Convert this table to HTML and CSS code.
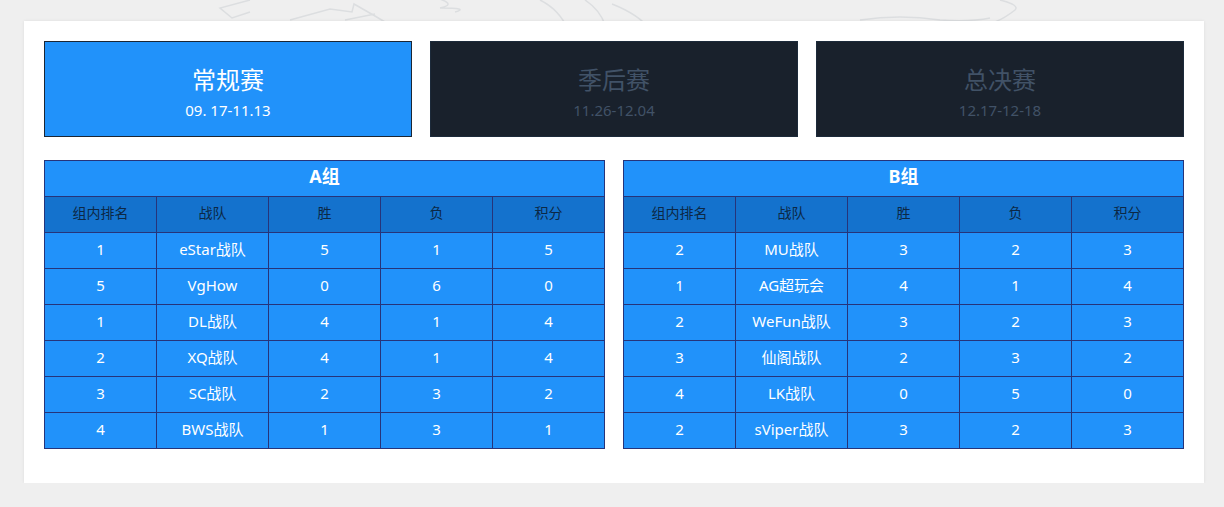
FILE: index.html
```html
<!DOCTYPE html>
<html>
<head>
  <title>赛程积分</title>
  <meta charset="utf-8">
  <link rel="stylesheet" href="styles.css">
</head>
<body>
  <svg class="bg-art" width="1224" height="40" viewBox="0 0 1224 40">
    <path d="M250 0 L220 8 L232 18 L250 12" />
    <path d="M290 20 L330 9 L352 12 L354 4 L375 16 L385 22" />
    <path d="M345 20 L375 14" />
    <path d="M430 -4 Q460 4 440 8 Q470 8 455 12" />
    <path d="M540 0 Q560 10 568 30" />
    <path d="M585 0 Q600 10 605 25 M612 4 Q640 15 650 30" />
    <path d="M860 20 Q900 14 940 20 Q970 22 990 18" />
    <path d="M1000 0 Q1020 5 1015 10 Q1005 18 995 22" />
  </svg>

  <div class="panel">
    <div class="stages">
      <div class="stage active">
        <div class="stage-name">常规赛</div>
        <div class="stage-date">09. 17-11.13</div>
      </div>
      <div class="stage">
        <div class="stage-name">季后赛</div>
        <div class="stage-date">11.26-12.04</div>
      </div>
      <div class="stage">
        <div class="stage-name">总决赛</div>
        <div class="stage-date">12.17-12-18</div>
      </div>
    </div>

    <div class="groups">
      <table class="group">
        <tr><th colspan="5" class="group-title">A组</th></tr>
        <tr class="cols"><td>组内排名</td><td>战队</td><td>胜</td><td>负</td><td>积分</td></tr>
        <tr><td>1</td><td>eStar战队</td><td>5</td><td>1</td><td>5</td></tr>
        <tr><td>5</td><td>VgHow</td><td>0</td><td>6</td><td>0</td></tr>
        <tr><td>1</td><td>DL战队</td><td>4</td><td>1</td><td>4</td></tr>
        <tr><td>2</td><td>XQ战队</td><td>4</td><td>1</td><td>4</td></tr>
        <tr><td>3</td><td>SC战队</td><td>2</td><td>3</td><td>2</td></tr>
        <tr><td>4</td><td>BWS战队</td><td>1</td><td>3</td><td>1</td></tr>
      </table>
      <table class="group">
        <tr><th colspan="5" class="group-title">B组</th></tr>
        <tr class="cols"><td>组内排名</td><td>战队</td><td>胜</td><td>负</td><td>积分</td></tr>
        <tr><td>2</td><td>MU战队</td><td>3</td><td>2</td><td>3</td></tr>
        <tr><td>1</td><td>AG超玩会</td><td>4</td><td>1</td><td>4</td></tr>
        <tr><td>2</td><td>WeFun战队</td><td>3</td><td>2</td><td>3</td></tr>
        <tr><td>3</td><td>仙阁战队</td><td>2</td><td>3</td><td>2</td></tr>
        <tr><td>4</td><td>LK战队</td><td>0</td><td>5</td><td>0</td></tr>
        <tr><td>2</td><td>sViper战队</td><td>3</td><td>2</td><td>3</td></tr>
      </table>
    </div>
  </div>
</body>
</html>
```

FILE: styles.css
```css
* {
  margin: 0;
  padding: 0;
  box-sizing: border-box;
}

body {
  font-family: "Noto Sans", "Noto Sans CJK SC", sans-serif;
  background: #efefef;
  padding: 21px 20px 0 24px;
  position: relative;
}

.bg-art {
  position: absolute;
  left: 0;
  top: 0;
}

.bg-art path {
  fill: none;
  stroke: #dcdee0;
  stroke-width: 1.5;
}

.panel {
  position: relative;
  width: 1180px;
  height: 462px;
  background: #fff;
  padding: 20px;
  box-shadow: 0 0 3px rgba(0,0,0,0.08);
}

.stages {
  display: grid;
  grid-template-columns: repeat(3, 1fr);
  gap: 18px;
}

.stage {
  height: 96px;
  background: #19212c;
  border: 1px solid #1c2a3a;
  color: #415267;
  display: flex;
  flex-direction: column;
  align-items: center;
  justify-content: center;
  padding-top: 8px;
}

.stage.active {
  background: #2192fa;
  border-color: #1b2634;
  color: #fff;
}

.stage-name {
  font-size: 24px;
  line-height: 30px;
}

.stage-date {
  font-size: 15px;
  line-height: 22px;
  margin-top: 4px;
}

.groups {
  margin-top: 23px;
  display: grid;
  grid-template-columns: 1fr 1fr;
  gap: 18px;
}

.group {
  width: 100%;
  border-collapse: collapse;
  table-layout: fixed;
  background: #2192fa;
  color: #fff;
  font-size: 15px;
  text-align: center;
}

.group td,
.group th {
  border: 1px solid #26347a;
  height: 36px;
  padding: 0 0 3px;
  line-height: 20px;
}

.group th.group-title {
  font-size: 18px;
  font-weight: bold;
  padding-bottom: 6px;
}

.cols td {
  background: #1472cd;
  color: #0c2845;
  font-size: 14px;
}
```
